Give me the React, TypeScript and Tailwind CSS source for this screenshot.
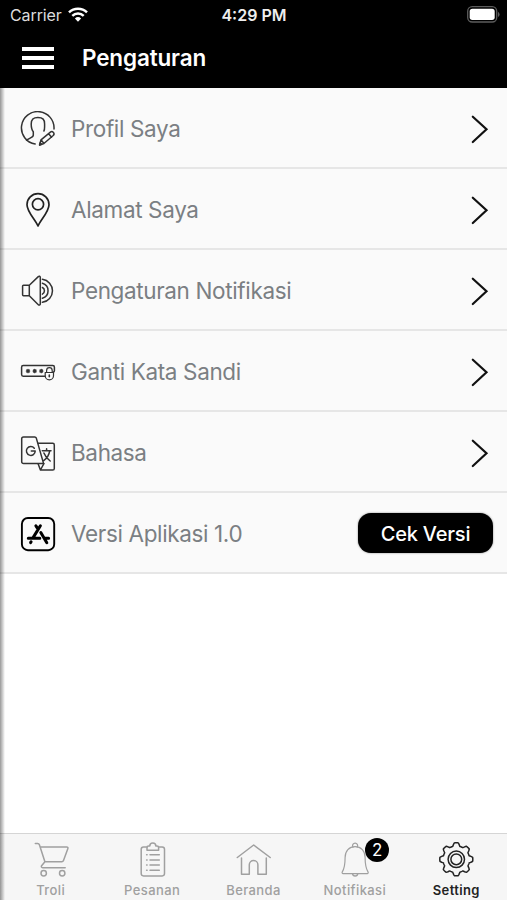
import type { ReactNode } from 'react'

const Icon = ({ children, className = '' }: { children: ReactNode; className?: string }) => (
  <svg
    viewBox="0 0 36 36"
    className={`w-9 h-9 shrink-0 ${className}`}
    fill="none"
    stroke="currentColor"
    strokeWidth="1.5"
    strokeLinecap="round"
    strokeLinejoin="round"
  >
    {children}
  </svg>
)

// Outline of the settings cog, eight rounded teeth
const gearPath = () => {
  const points: string[] = []
  for (let i = 0; i < 160; i++) {
    const a = (i / 160) * Math.PI * 2
    const wave = Math.max(-1, Math.min(1, Math.cos(a * 8) * 1.7))
    const r = 14.9 + wave * 1.6
    points.push(`${(18.3 + r * Math.cos(a)).toFixed(2)} ${(17.3 + r * Math.sin(a)).toFixed(2)}`)
  }
  return `M${points.join('L')}Z`
}

const menu = [
  {
    label: 'Profil Saya',
    icon: (
      <Icon className="text-[#333]">
        <path d="M34 18A16.3 16.3 0 1 0 15.2 33" />
        <path d="M23.9 20c.6-1 .7-2.3.7-4.2v-2.8c0-4.400-1.600-6.400-6.700-6.400s-6.700 2-6.700 6.400c0 4.700.7 6.100 2.100 7.700v3.600c0 2.200-3.800 2.800-6.800 4.800" />
        <path d="M19.6 34l1.4-5.2 9.400-7.700c1-.8 2.200-.6 3 .3.8 1 .8 2.200-.2 3.100l-9.300 8zM21 28.800l3 3.600M28.600 22.700l3 3.500" />
        <path d="M19.600 34l.6-2.200 1.400 1.500z" fill="currentColor" />
      </Icon>
    ),
  },
  {
    label: 'Alamat Saya',
    icon: (
      <Icon className="text-[#222]">
        <path strokeWidth="1.700" d="M18 34C15 27.500 7 19.500 7 12.700a11 11 0 0 1 22 0C29 19.500 21 27.500 18 34z" />
        <circle strokeWidth="1.700" cx="18" cy="12.300" r="5.600" />
      </Icon>
    ),
  },
  {
    label: 'Pengaturan Notifikasi',
    icon: (
      <Icon className="text-[#333]">
        <path d="M9.300 12.200H3.500a.9.900 0 0 0-.9.900v8.700c0 .5.400.9.900.9h5.800zM9.300 12.200l9-8.600c.8-.7 2-.3 2 .8v26.500c0 1.100-1.200 1.500-2 .8l-9-9" />
        <path d="M22.400 14.500a3.700 3.700 0 0 1 0 6.600M22.400 10.300a7.800 7.800 0 0 1 0 15M22.400 6.300a11.600 11.600 0 0 1 0 23" />
      </Icon>
    ),
  },
  {
    label: 'Ganti Kata Sandi',
    icon: (
      <Icon className="text-[#333]">
        <path d="M25 22.200H3.200a1.600 1.600 0 0 1-1.600-1.600v-7.400c0-.9.700-1.600 1.600-1.600h29.600c.9 0 1.600.7 1.600 1.600v3.500c0 .8-.4 1.300-1.200 1.400" />
        <path d="M26.600 18.300v-1.800a2.800 2.800 0 0 1 5.600 0v1.800M25.200 18.500h8.300v3.200a4.100 4.100 0 0 1-8.300 0z" strokeWidth="1.200" />
        <path d="M29.300 21v1.800" strokeWidth="1.600" />
        <path
          d="M6.300 17h3.400M8 15.300v3.400M6.800 15.800l2.400 2.400M9.200 15.800l-2.400 2.400M13 17h3.400M14.700 15.300v3.400M13.500 15.800l2.400 2.400M15.900 15.800l-2.400 2.400M19.600 17H23M21.300 15.300v3.400M20.100 15.800l2.400 2.400M22.500 15.800l-2.400 2.400"
          strokeWidth="1.200"
        />
      </Icon>
    ),
  },
  {
    label: 'Bahasa',
    icon: (
      <Icon className="text-[#333]">
        <path d="M3.500 1.900h11.200c.8 0 1.300.4 1.600 1.200l7.300 25.500H3.500a1.800 1.800 0 0 1-1.800-1.800v-23c0-1 .8-1.900 1.800-1.900z" />
        <path d="M18.200 8.300h14.500c.9 0 1.600.7 1.600 1.600v23.600c0 .9-.7 1.600-1.600 1.600H20.400l-2.300-6.300M20.400 35l3.500-6.400" />
        <path d="M14.300 13.300a4.400 4.400 0 1 0 .9 2.700h-3.900" />
        <path d="M22.300 15.800H31M26.600 13.800v2M29.700 15.800c-.6 4-3 7.600-6 9.800M23.900 18c1.300 3.300 3.500 6 6.300 8" />
      </Icon>
    ),
  },
  {
    label: 'Versi Aplikasi 1.0',
    icon: (
      <Icon className="text-black">
        <rect x="1.900" y="2" width="32.300" height="32.200" rx="6" strokeWidth="1.900" />
        <path strokeWidth="3" d="M20.400 9.800l-7.600 12.300M15.900 9.800l2 3M8.300 22.200h11.500M20.800 16.500l6 10.200M25.400 22.200h3.200M11.100 25.700l-.5.900" />
      </Icon>
    ),
  },
]

const tabs = [
  {
    label: 'Troli',
    icon: (
      <>
        <path d="M2.300 1.600h2.400c.9 0 1.400.4 1.700 1.200l5.500 17M7.200 5h26.600c.9 0 1.400.7 1.100 1.500l-4.400 12c-.3.800-.9 1.200-1.700 1.200H11.900l-3.300 4c-.6.900-.2 2 1 2h22.600" />
        <circle cx="10.700" cy="31.300" r="2.700" />
        <circle cx="29.200" cy="31.300" r="2.700" />
      </>
    ),
  },
  {
    label: 'Pesanan',
    icon: (
      <>
        <path d="M13 5H9.500a2.300 2.300 0 0 0-2.300 2.300v24.300a2.300 2.300 0 0 0 2.300 2.300h18.700a2.300 2.300 0 0 0 2.300-2.300V7.300A2.300 2.300 0 0 0 28.200 5h-3.500" />
        <path d="M13 8.200V5.700c0-1 .7-1.600 1.600-1.600h1.200c0-1.800 1.200-3 3-3s3 1.200 3 3H23c1 0 1.600.7 1.600 1.600v2.500z" />
        <path d="M12.600 12.800h.5M12.600 18h.5M12.600 23h.5M12.600 28.200h.5M16 12.800h9.300M16 18h9.300M16 23h9.300M16 28.200h9.300" />
      </>
    ),
  },
  {
    label: 'Beranda',
    icon: <path d="M2.300 15.500L18.700 3l16.500 12.500M6.500 16v16.200h7.800v-9.500a4.300 4.300 0 0 1 8.600 0v9.500h8.400V16" />,
  },
  {
    label: 'Notifikasi',
    badge: 2,
    icon: (
      <>
        <path d="M15.900 5.100c-1-2 .2-4 2.200-4s3.200 2 2.200 4" strokeWidth="1.200" />
        <path d="M18.100 4.700c-6 0-10 4.400-10 10.800 0 6.800-.4 10.500-2.800 14.400-.5.900-.1 1.700.8 1.700h24.100c.9 0 1.300-.8.800-1.700-2.400-3.900-2.900-7.600-2.900-14.400 0-6.400-4-10.800-10-10.800z" strokeWidth="1.200" />
        <path d="M15.600 31.800c.3 3 4.800 3 5.100 0" />
      </>
    ),
  },
  {
    label: 'Setting',
    active: true,
    icon: (
      <>
        <path d={gearPath()} />
        <circle cx="18.300" cy="17.300" r="8.200" />
        <circle cx="18.300" cy="17.300" r="5.400" />
      </>
    ),
  },
]

const StatusBar = () => (
  <div className="h-[29px] grid grid-cols-3 items-center pl-[10px] pr-[7px]">
    <div className="flex items-center gap-[6px] text-[#ddd]">
      <span className="text-[16px] tracking-[-0.1px]">Carrier</span>
      <svg viewBox="0 0 20 15" className="w-5 h-[15px]" fill="none" stroke="#fff" strokeWidth="2.500">
        <path d="M1 5.400a13 13 0 0 1 18 0M4.300 8.900a8.200 8.200 0 0 1 11.400 0" />
        <path d="M10 14.700l-3.100-3.200a4.600 4.600 0 0 1 6.200 0z" fill="#fff" stroke="none" />
      </svg>
    </div>
    <span className="pr-[2px] text-center text-[16px] font-semibold text-[#eee]">4:29 PM</span>
    <svg viewBox="0 0 33 17" className="w-[33px] h-[17px] justify-self-end">
      <rect x=".7" y=".7" width="29" height="15.300" rx="4.500" fill="none" stroke="#5c5c5c" strokeWidth="1.300" />
      <rect x="2.700" y="2.700" width="25" height="11.300" rx="2.700" fill="#fff" />
      <path d="M31 5.800q1.600 1 1.600 2.600T31 11z" fill="#5c5c5c" />
    </svg>
  </div>
)

const App = () => {
  return (
    <div className="relative w-[507px] h-[900px] flex flex-col overflow-hidden bg-white font-['Inter',sans-serif]">
      {/* Header */}
      <header className="h-[88px] shrink-0 bg-black text-white">
        <StatusBar />
        <div className="h-[58px] flex items-center pl-[22px]">
          <button className="w-8 flex flex-col gap-[5px]">
            <span className="h-1 bg-white" />
            <span className="h-1 bg-white" />
            <span className="h-1 bg-white" />
          </button>
          <h1 className="ml-7 text-[22.500px] font-semibold tracking-[-0.150px]">Pengaturan</h1>
        </div>
      </header>

      {/* Menu */}
      <main className="flex-1">
        {menu.map((item, i) => (
          <div key={item.label} className="h-[81px] flex items-center pl-5 pt-[2px] bg-[#fafafa] border-b-2 border-[#e6e6e6]">
            {item.icon}
            <span className="ml-[15px] mt-[1px] flex-1 text-[22.500px] tracking-[-0.360px] text-[#7b7f83]">{item.label}</span>
            {i < menu.length - 1 ? (
              <svg viewBox="0 0 18 30" className="w-[18px] h-[30px] mr-[18px]" fill="none" stroke="#111" strokeWidth="2.200" strokeLinecap="round">
                <path d="M1.800 2.700L15.500 15.300 1.800 28" />
              </svg>
            ) : (
              <button className="w-[135px] h-10 mr-[14px] mb-[2px] pt-[2px] rounded-[13px] bg-black text-white text-[20px] font-medium tracking-[-0.200px] shadow-[0_0_2px_rgba(0,0,0,0.5)]">
                Cek Versi
              </button>
            )}
          </div>
        ))}
      </main>

      {/* Tab bar */}
      <nav className="h-[67px] shrink-0 grid grid-cols-5 bg-[#f6f6f6] border-t border-[#d5d5d5]">
        {tabs.map((tab) => (
          <div
            key={tab.label}
            className={`relative flex flex-col items-center pt-2 ${tab.active ? 'text-[#222]' : 'text-[#a0a0a0]'}`}
          >
            <Icon>{tab.icon}</Icon>
            <span className={`mt-1 text-[13px] leading-4 tracking-[0.400px] ${tab.active ? 'font-semibold' : 'font-medium'}`}>
              {tab.label}
            </span>
            {tab.badge && (
              <span className="absolute top-1 left-[61px] w-6 h-6 rounded-full bg-black text-white text-[17px] leading-6 text-center">
                {tab.badge}
              </span>
            )}
          </div>
        ))}
      </nav>

      {/* Drawer edge shadow */}
      <div className="absolute left-0 top-[88px] bottom-0 w-[5px] bg-linear-to-r from-black/40 to-transparent" />
    </div>
  )
}

export default App
